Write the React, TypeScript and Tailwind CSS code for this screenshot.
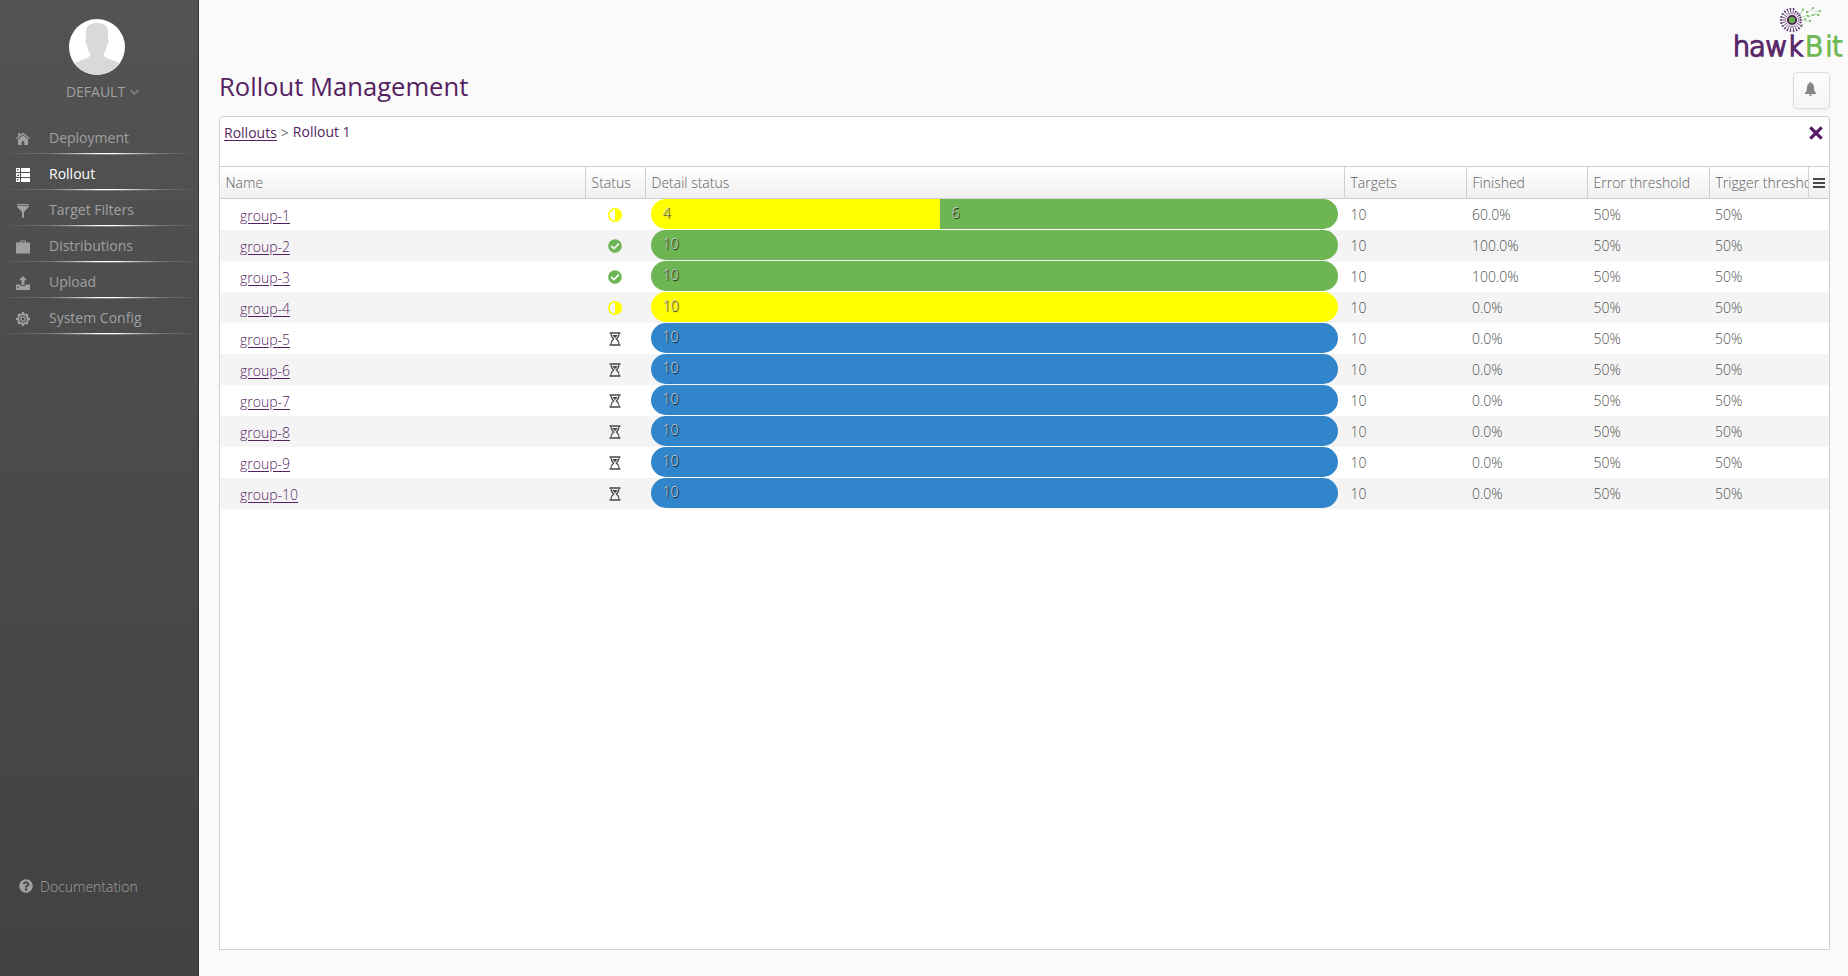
import React from "react";
import { FaCheckCircle, FaQuestionCircle } from "react-icons/fa";

const NAV = ["Deployment", "Rollout", "Target Filters", "Distributions", "Upload", "System Config"];

function NavIcon({ name }: { name: string }) {
  return (
    <svg width="14" height="14" viewBox="0 0 14 14" fill="currentColor">
      {name === "Deployment" && (
        <>
          <path d="M7 .4 14 6.300l-.7 1L7 2.200l-6.300 5.100-.7-1 2.200-1.800V1H4.200v1.800z" />
          <path d="M7 3.300 2 7.400V13h3.700V9.200h2.600V13H12V7.400z" />
        </>
      )}
      {name === "Rollout" && (
        <path
          fillRule="evenodd"
          d="M0 0h4v4H0zM5 0h9v4H5zM0 5h4v4H0zM5 5h9v4H5zM0 10h4v4H0zM5 10h9v4H5zM1 1v1.500h1.500V1zM1.500 6.500V8H3V6.500zM1 11v1.500h1.500V11z"
        />
      )}
      {name === "Target Filters" && <path d="M1 0h12v1.300H1zM1 2h12v.8L8 8v5.200L6 14V8L1 2.800z" />}
      {name === "Distributions" && (
        <path fillRule="evenodd" d="M4 2.500V1.300L4.800.5h4.400l.8.8v1.200h4v11H0v-11zM5 2.500h4v-1H5z" />
      )}
      {name === "Upload" && (
        <>
          <path d="M7 0 3 4.200h2.500V9h3V4.200H11z" />
          <path fillRule="evenodd" d="M0 8.500h4.500V10h5V8.500H14V14H0zM1.500 10.800v1.400H3v-1.400z" />
        </>
      )}
      {name === "System Config" && (
        <path
          fillRule="evenodd"
          d="M14 8V6l-1.700-.5-.4-1 .8-1.500L11.100 1.400l-1.500.8-1-.4L8 0H6l-.5 1.700-1 .4L3 1.300 1.400 2.900l.8 1.500-.4 1L0 6v2l1.700.5.4 1L1.300 11l1.500 1.500 1.500-.8 1 .4L6 14h2l.5-1.700 1-.4 1.500.8 1.500-1.500-.8-1.500.4-1zM7 10.800A3.800 3.800 0 1 1 7 3.200a3.800 3.800 0 0 1 0 7.600zM7 9.800A2.800 2.800 0 1 0 7 4.200a2.800 2.800 0 0 0 0 5.600zM7 8.500A1.500 1.500 0 1 1 7 5.500a1.500 1.500 0 0 1 0 3z"
        />
      )}
    </svg>
  );
}

function Hourglass() {
  return (
    <svg width="12" height="14" viewBox="0 0 12 14" className="text-[#474747]" fill="none" stroke="currentColor">
      <path d="M.5 .9h11M.5 13.100h11" strokeWidth="1.500" />
      <path d="M2 1.500c0 3 1 4.300 2.700 5.500C3 8.200 2 9.500 2 12.500M10 1.500c0 3-1 4.300-2.700 5.500C9 8.200 10 9.500 10 12.500" strokeWidth="1.100" />
      <path d="M3.200 3h5.600L6.500 5.700h-1z" fill="currentColor" stroke="none" />
    </svg>
  );
}

function HalfCircle() {
  return (
    <svg width="14" height="14" viewBox="0 0 14 14" fill="#ffff00">
      <path fillRule="evenodd" d="M7 0a7 7 0 1 1 0 14A7 7 0 0 1 7 0zM7 1.600a5.400 5.400 0 0 0 0 10.800z" />
    </svg>
  );
}

function Logo() {
  const rays = Array.from({ length: 22 }, (_, i) => (i * 360) / 22);
  return (
    <svg width="120" height="62" viewBox="1728 4 120 62" className="block">
      {rays.map((deg) => {
        const right = deg > 285 || deg < 25;
        const a = (deg * Math.PI) / 180;
        const c = Math.cos(a);
        const s = Math.sin(a);
        const far = right ? 9 : 11.2;
        return (
          <g key={deg} stroke="#5a2a6b" fill="#5a2a6b">
            <line x1={1792 + 5.8 * c} y1={20 + 5.8 * s} x2={1792 + far * c} y2={20 + far * s} strokeWidth=".8" />
            <circle cx={1792 + far * c} cy={20 + far * s} r=".8" strokeWidth=".3" />
          </g>
        );
      })}
      <circle cx="1792" cy="20" r="4.200" fill="#65b247" stroke="#4c1a5c" strokeWidth="1.800" />
      <g stroke="#8cc97a" strokeWidth=".6" fill="#65b247">
        <path d="M1800 15l3-5M1802 17l6-2M1802 20l8 1M1806 13l7-4M1808 17l5-2M1813 14l7 1M1814 12l6-1" fill="none" />
        <g stroke="none">
          <circle cx="1803" cy="9.500" r="1" />
          <circle cx="1807" cy="12" r="1" />
          <circle cx="1808" cy="16" r="1.100" />
          <circle cx="1805" cy="19" r=".9" />
          <circle cx="1810" cy="21" r="1" />
          <circle cx="1813" cy="8" r="1" />
          <circle cx="1813" cy="15" r=".9" />
          <circle cx="1818" cy="15" r=".9" />
          <circle cx="1820" cy="11" r="1" />
          <circle cx="1802" cy="25" r=".9" />
        </g>
      </g>
      <g fontSize="27.500" strokeWidth="1.700" textRendering="geometricPrecision" className="font-['DejaVu_Sans',sans-serif]">
        <text x="1732.700 1749 1765.300 1787.200" y="56" fill="#5a2a6b" stroke="#5a2a6b">hawk</text>
        <text x="1804.700 1825.300 1832" y="56" fill="#6fb955" stroke="#6fb955">Bit</text>
      </g>
    </svg>
  );
}

type Status = "running" | "finished" | "waiting";
type Row = { name: string; status: Status; finished: string };
const ROWS: Row[] = [
  { name: "group-1", status: "running", finished: "60.0%" },
  { name: "group-2", status: "finished", finished: "100.0%" },
  { name: "group-3", status: "finished", finished: "100.0%" },
  { name: "group-4", status: "running", finished: "0.0%" },
  { name: "group-5", status: "waiting", finished: "0.0%" },
  { name: "group-6", status: "waiting", finished: "0.0%" },
  { name: "group-7", status: "waiting", finished: "0.0%" },
  { name: "group-8", status: "waiting", finished: "0.0%" },
  { name: "group-9", status: "waiting", finished: "0.0%" },
  { name: "group-10", status: "waiting", finished: "0.0%" },
];

const BAR: Record<Status, string> = {
  running: "bg-[#ffff00]",
  finished: "bg-[#6eb553]",
  waiting: "bg-[#3085cb]",
};

const COLS = "grid grid-cols-[366px_60px_699px_122px_121px_122px_minmax(0,1fr)]";

function BarLabel({ children }: { children: React.ReactNode }) {
  return (
    <span className="pl-[11.500px] leading-[28px] text-[#d0d0d0] [text-shadow:1px_1px_1px_#000]">{children}</span>
  );
}

function DetailBar({ row }: { row: Row }) {
  return (
    <div className="mr-[7px] ml-[5px] flex h-[30px] overflow-hidden rounded-[15px]">
      {row.name === "group-1" ? (
        <>
          <div className="flex w-[289px] bg-[#ffff00]"><BarLabel>4</BarLabel></div>
          <div className="flex flex-1 bg-[#6eb553]"><BarLabel>6</BarLabel></div>
        </>
      ) : (
        <div className={"flex flex-1 " + BAR[row.status]}><BarLabel>10</BarLabel></div>
      )}
    </div>
  );
}

export default function App() {
  return (
    <div className="flex h-[976px] w-[1848px] overflow-hidden bg-[#fafafa] font-['Open_Sans',sans-serif] text-[14px] font-light text-[#505050]">
      <aside className="flex w-[199px] shrink-0 flex-col border-r border-[#343434] bg-linear-to-b from-[#535353] via-[#4a4a4a] to-[#424242] font-normal text-[#a0a0a0]">
        <div className="flex h-[118px] flex-col items-center pt-[19px] pr-1">
          <svg width="56" height="56" viewBox="0 0 56 56">
            <defs><clipPath id="avatar"><circle cx="28" cy="28" r="28" /></clipPath></defs>
            <g clipPath="url(#avatar)">
              <rect width="56" height="56" fill="#fff" />
              <path fill="#d9d9d9" d="M17 13c0-6 4-9 11-9s11 3 11 9v6c1.500 1 .5 5-1 7-.5 4-1.500 6-3 8v3c3 3 10 4 15 7l6 5v9H0v-9l6-5c5-3 12-4 15-7v-3c-1.500-2-2.500-4-3-8-1.500-2-2.500-6-1-7z" />
            </g>
          </svg>
          <div className="mt-[7px] flex items-center gap-[5px] pl-[11px] leading-5">
            DEFAULT
            <svg width="9" height="7" viewBox="0 0 9 7" fill="none" stroke="#858585" strokeWidth="1.700"><path d="M.7 1.200 4.500 5 8.300 1.200" /></svg>
          </div>
        </div>
        <nav>
          {NAV.map((n) => (
            <div key={n} className="flex h-9 flex-col">
              <div className={"flex h-[35px] items-center pt-1 " + (n === "Rollout" ? "text-white" : "")}>
                <span className="mt-0.5 ml-4 w-[33px]"><NavIcon name={n} /></span>
                {n}
              </div>
              <div className="h-px bg-[linear-gradient(to_right,#505050,#747474_25%,#a8a8a8_36%,#fff_50%,#fff_58%,#a8a8a8_72%,#747474_82%,#505050)]" />
              <div className="-mb-px h-px bg-[linear-gradient(to_right,transparent_25%,#ffffff50_54%,transparent_82%)]" />
            </div>
          ))}
        </nav>
        <div className="mt-auto mb-[80px] flex h-5 items-center gap-[7px] pl-[19px] font-light">
          <FaQuestionCircle size={14} />
          Documentation
        </div>
      </aside>

      <main className="flex flex-1 flex-col pr-[18px] pl-5">
        <header className="flex h-[116px] justify-between">
          <h1 className="pt-[69px] text-[25.600px] leading-[36px] font-normal text-[#551f62]">Rollout Management</h1>
          <div className="-mr-[18px] flex w-[120px] flex-col pt-1">
            <Logo />
            <button className="mt-1.5 ml-[65px] flex h-[37px] w-[37px] items-center justify-center rounded border border-[#dcdcdc] bg-linear-to-b from-[#fcfcfc] to-[#f6f6f6] pr-0.5 pb-[3px] shadow-[0_2px_3px_rgba(0,0,0,0.04)]">
              <svg width="11" height="14" viewBox="0 0 11 14" fill="#858585"><path d="M5.500 0c.7 0 .9.500.9 1C8.500 1.500 9 3.500 9 5.500c0 2.500.5 4.500 2 5.500v1H0v-1c1.500-1 2-3 2-5.500C2 3.500 2.500 1.500 4.600 1c0-.5.2-1 .9-1zM4 12.500h3c0 .8-.7 1.500-1.500 1.500S4 13.300 4 12.500z" /></svg>
            </button>
          </div>
        </header>

        <section className="flex h-[834px] w-[1611px] flex-col rounded-t border border-[#d0d0d0] bg-white">
          <div className="flex h-[49px] items-start justify-between pt-[5px] pr-[6.500px] pl-1 font-normal text-[#551f62]">
            <div className="flex gap-1 leading-5">
              <span className="pt-px underline underline-offset-2">Rollouts</span>
              <span className="pt-px text-[#777]">&gt;</span>
              <span>Rollout 1</span>
            </div>
            <svg width="14" height="14" viewBox="0 0 14 14" className="mt-1" stroke="#551a5f" strokeWidth="3.200"><path d="M1.300 1.300l11.400 11.400M12.700 1.300L1.300 12.700" /></svg>
          </div>

          <div className="flex h-[33px] border-y border-[#d0d0d0] bg-linear-to-b from-white to-[#f0f0f0] text-[#606060]">
            <div className={COLS + " min-w-0 flex-1 leading-[31px]"}>
              {["Name", "Status", "Detail status", "Targets", "Finished", "Error threshold", "Trigger threshold"].map((h) => (
                <div key={h} className="overflow-hidden border-r border-[#d0d0d0] pl-[5.500px] whitespace-nowrap">{h}</div>
              ))}
            </div>
            <div className="flex w-5 flex-col items-center justify-center gap-0.5">
              <i className="h-0.5 w-3 bg-[#474747]" />
              <i className="h-0.5 w-3 bg-[#474747]" />
              <i className="h-0.5 w-3 bg-[#474747]" />
            </div>
          </div>

          {ROWS.map((r) => (
            <div key={r.name} className={COLS + " h-[31px] leading-[31px] odd:bg-white even:bg-[#f4f4f4]"}>
              <div className="pt-px pl-5 text-[#551f62] underline underline-offset-2">{r.name}</div>
              <div className="flex items-center justify-center pr-0.5">
                {r.status === "running" && <HalfCircle />}
                {r.status === "finished" && <FaCheckCircle size={14} className="text-[#6eb553]" />}
                {r.status === "waiting" && <Hourglass />}
              </div>
              <DetailBar row={r} />
              <div className="pl-[5.500px]">10</div>
              <div className="pl-[5px]">{r.finished}</div>
              <div className="pl-[5.500px]">50%</div>
              <div className="pl-[5px]">50%</div>
            </div>
          ))}
        </section>
      </main>
    </div>
  );
}
